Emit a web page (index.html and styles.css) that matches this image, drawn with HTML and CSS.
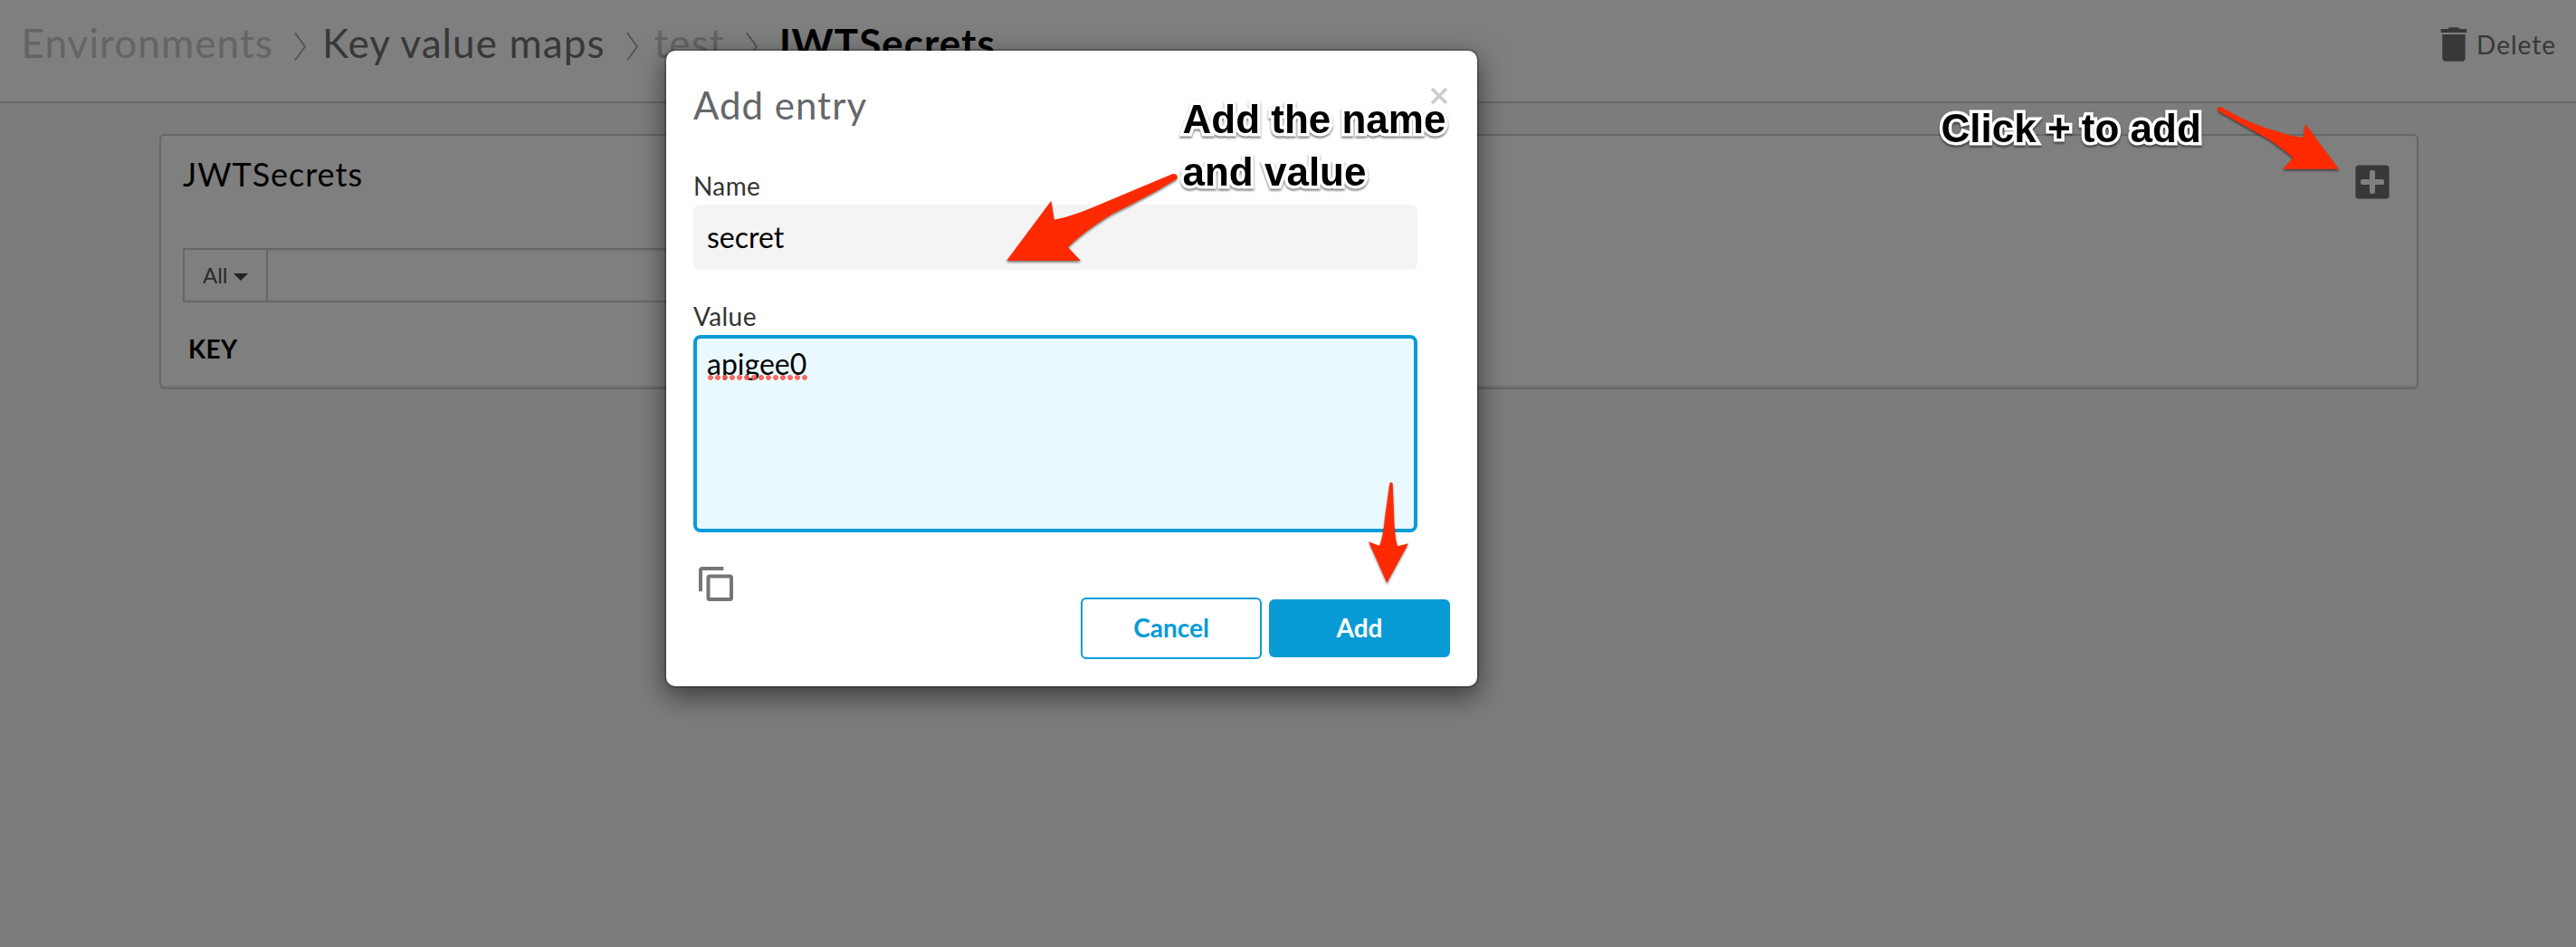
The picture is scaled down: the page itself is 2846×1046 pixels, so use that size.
FILE: index.html
```html
<!DOCTYPE html>
<html lang="en">
<head>
<meta charset="utf-8">
<title>Key value maps - JWTSecrets</title>
<link rel="stylesheet" href="styles.css">
</head>
<body>
<div class="page">
  <header class="topbar">
    <nav class="crumbs">
      <span class="crumb crumb-muted">Environments</span>
      <svg class="chevron" viewBox="0 0 13 31"><path d="M1 .5 12 15.5 1 30.5"/></svg>
      <span class="crumb crumb-link">Key value maps</span>
      <svg class="chevron" viewBox="0 0 13 31"><path d="M1 .5 12 15.5 1 30.5"/></svg>
      <span class="crumb crumb-muted">test</span>
      <svg class="chevron" viewBox="0 0 13 31"><path d="M1 .5 12 15.5 1 30.5"/></svg>
      <span class="crumb crumb-current">JWTSecrets</span>
    </nav>
    <div class="delete">
      <svg class="trash" viewBox="0 0 30 38"><path d="M8.5 2 10 .3H20L21.500 2H29.300V6H.7V2Z"/><path d="M2.300 8H27.700V34Q27.700 37.700 24 37.700H6Q2.300 37.700 2.300 34Z"/></svg>
      <span>Delete</span>
    </div>
  </header>

  <main class="card">
    <div class="card-head">
      <h2 class="card-title">JWTSecrets</h2>
      <svg class="plus" viewBox="0 0 38 38"><path fill-rule="evenodd" d="M4 .4H34Q37.600.4 37.600 4V34Q37.600 37.600 34 37.600H4Q.4 37.600.4 34V4Q.4.4 4 .4ZM18 6Q16 6 16 8V16H8Q6 16 6 18V20Q6 22 8 22H16V30Q16 32 18 32H20Q22 32 22 30V22H30Q32 22 32 20V18Q32 16 30 16H22V8Q22 6 20 6Z"/></svg>
    </div>
    <div class="search">
      <div class="search-scope">All<span class="caret"></span></div>
      <div class="search-input"></div>
    </div>
    <div class="column-key">KEY</div>
  </main>
</div>

<div class="overlay">
  <section class="modal">
    <div class="modal-head">
      <h3 class="modal-title">Add entry</h3>
      <svg class="close" viewBox="0 0 20 20"><path d="M2 2 18 18M18 2 2 18"/></svg>
    </div>
    <div class="label">Name</div>
    <div class="input">secret</div>
    <div class="label label-value">Value</div>
    <div class="textarea"><span class="misspelled">apigee0</span></div>
    <div class="modal-foot">
      <svg class="copy" viewBox="0 0 38 38"><path d="M27.300 2H4Q2 2 2 4V27.300"/><rect x="10.500" y="10.500" width="25.500" height="25.500" rx="1.500"/></svg>
      <div class="buttons">
        <div class="button button-outline">Cancel</div>
        <div class="button button-primary">Add</div>
      </div>
    </div>
  </section>
</div>

<svg class="arrows" viewBox="0 0 2846 1046">
  <path d="M1294.500 192.500C1299 190.500 1303 195 1299.500 198Q1269 217 1228 236.700Q1197 256 1179.900 273L1194 288H1112L1161.400 221.700L1164.700 242.700Q1185 239 1217 225Q1250 211 1294.500 192.500Z"/>
  <path d="M2450.500 118.500Q2453 116.500 2456 119.500Q2486 137 2517 145.500Q2532 151 2544.500 151.700L2547 136.700L2584 186.700H2522L2533.400 174.300Q2524 166 2506.500 154L2451.500 123Q2449 121 2450.500 118.500Z"/>
  <path d="M1535.300 534Q1537 531 1538.700 534L1540 567Q1540.500 592 1544 603.300L1556 600.300L1532.300 643.700L1512 598.300L1524 602.700Q1528 594 1530 572Z"/>
</svg>
<div class="note note-modal">Add the name<br>and value</div>
<div class="note note-plus">Click + to add</div>
</body>
</html>
```
FILE: styles.css
```css
* { box-sizing: border-box; }

body {
  margin: 0;
  position: relative;
  height: 1046px;
  overflow: hidden;
  font-family: Lato, sans-serif;
  color: #000;
}

svg { display: block; flex: none; }

.page { height: 1046px; background: #f8f8f8; }

/* Top bar */
.topbar {
  display: flex;
  justify-content: space-between;
  height: 114px;
  padding: 20px 22px 0 23.5px;
  background: #fff;
  border-bottom: 2px solid #ccc;
}
.crumbs { display: flex; font-size: 44px; line-height: 54px; letter-spacing: 1.1px; white-space: nowrap; }
.crumb-muted { color: #c8c8c8; }
.crumb-link { color: #707070; }
.crumb-current { font-weight: bold; letter-spacing: 1px; }
.chevron {
  width: 13px;
  height: 31px;
  margin: 16px 18px 0 23px;
  fill: none;
  stroke: #aaa;
  stroke-width: 2;
}
.delete {
  display: flex;
  gap: 10px;
  color: #707070;
  font-size: 28px;
  line-height: 34px;
  letter-spacing: 1px;
  padding-top: 12px;
}
.trash { width: 30px; height: 38px; margin-top: -2px; fill: #707070; }

/* Card */
.card {
  height: 282px;
  margin: 34px 174px 0 176px;
  padding: 20px 30px 0 24px;
  background: #fff;
  border: 2px solid #ccc;
  border-radius: 6px;
  box-shadow: inset 0 -2px 0 #e8e8e8;
}
.card-head { display: flex; justify-content: space-between; height: 44px; }
.card-title { margin: 0; font-size: 36px; font-weight: normal; line-height: 44px; letter-spacing: 1px; }
.plus { width: 38px; height: 38px; margin-top: 12px; fill: #707070; }
.search {
  display: flex;
  width: 1100px;
  height: 60px;
  margin-top: 60px;
  border: 2px solid #ccc;
}
.search-scope {
  display: flex;
  align-items: center;
  width: 92px;
  padding: 0 0 2px 20px;
  border-right: 2px solid #ccc;
  color: #555;
  font-size: 24px;
}
.caret {
  margin: 6px 0 0 6px;
  border: 8px solid transparent;
  border-top-color: #444;
  border-bottom: 0;
}
.search-input { flex: 1; box-shadow: inset 0 2px 2px #eee; }
.column-key { margin-top: 34px; padding-left: 6px; font-size: 28px; font-weight: bold; line-height: 34px; letter-spacing: .4px; }

/* Dialog */
.overlay {
  position: absolute;
  inset: 0;
  display: flex;
  align-items: flex-start;
  padding: 56px 0 0 736px;
  background: rgba(0, 0, 0, .5);
}
.modal {
  width: 896px;
  height: 702px;
  padding: 34px 30px 30px;
  background: #fff;
  border-radius: 10px;
  box-shadow: 0 0 0 2px rgba(0, 0, 0, .2), 0 10px 30px 2px rgba(0, 0, 0, .5);
}
.modal-head { display: flex; justify-content: space-between; height: 52px; }
.modal-title { margin: 0; color: #666769; font-size: 42px; font-weight: normal; line-height: 52px; letter-spacing: 1px; }
.close { width: 20px; height: 20px; margin: 6px 2px 0 0; fill: none; stroke: #ccc; stroke-width: 3.6; }
.label { margin: 46px 0 4px; color: #333; font-size: 28px; line-height: 34px; letter-spacing: .4px; }
.label-value { margin-top: 34px; }
.input {
  display: flex;
  align-items: center;
  width: 800px;
  height: 72px;
  padding: 0 0 2px 15px;
  background: #f4f4f4;
  border-radius: 8px;
  font-size: 32px;
}
.textarea {
  width: 800px;
  height: 218px;
  padding: 9px 11px;
  background: #eaf9ff;
  border: 4px solid #089bd6;
  border-radius: 8px;
  font-size: 32px;
  line-height: 38px;
}
.misspelled { position: relative; display: inline-block; }
.misspelled::after {
  content: "";
  position: absolute;
  left: 1px;
  top: 31px;
  width: 110px;
  height: 6px;
  background: radial-gradient(circle at 3px 3px, #fb5a50 2.600px, transparent 3.200px) 0 0 / 8px 6px;
  opacity: .9;
}
.modal-foot { display: flex; justify-content: space-between; height: 102px; margin-top: 38px; }
.copy { width: 38px; height: 38px; margin-left: 6px; fill: none; stroke: #757575; stroke-width: 4; }
.buttons { display: flex; gap: 8px; align-items: center; align-self: flex-end; }
.button {
  display: flex;
  align-items: center;
  justify-content: center;
  width: 200px;
  padding-bottom: 2px;
  border-radius: 6px;
  font-size: 28px;
  font-weight: bold;
}
.button-outline { height: 68px; border: 2px solid #089bd6; color: #089bd6; }
.button-primary { height: 64px; background: #089bd6; color: #fff; }

/* Callouts drawn over the screen */
.arrows {
  position: absolute;
  left: 0;
  top: 0;
  width: 2846px;
  height: 1046px;
  fill: #ff2a00;
  filter: drop-shadow(0 2px 1px rgba(0, 0, 0, .45));
}
.note {
  position: absolute;
  font: bold 44px/58px "Liberation Sans", sans-serif;
  white-space: nowrap;
  -webkit-text-stroke: 7px #fff;
  paint-order: stroke fill;
  stroke-linejoin: round;
  filter: drop-shadow(0 2px 1px rgba(0, 0, 0, .5));
}
.note-modal { left: 1306.500px; top: 103px; }
.note-plus { left: 2144.500px; top: 113px; }
```
